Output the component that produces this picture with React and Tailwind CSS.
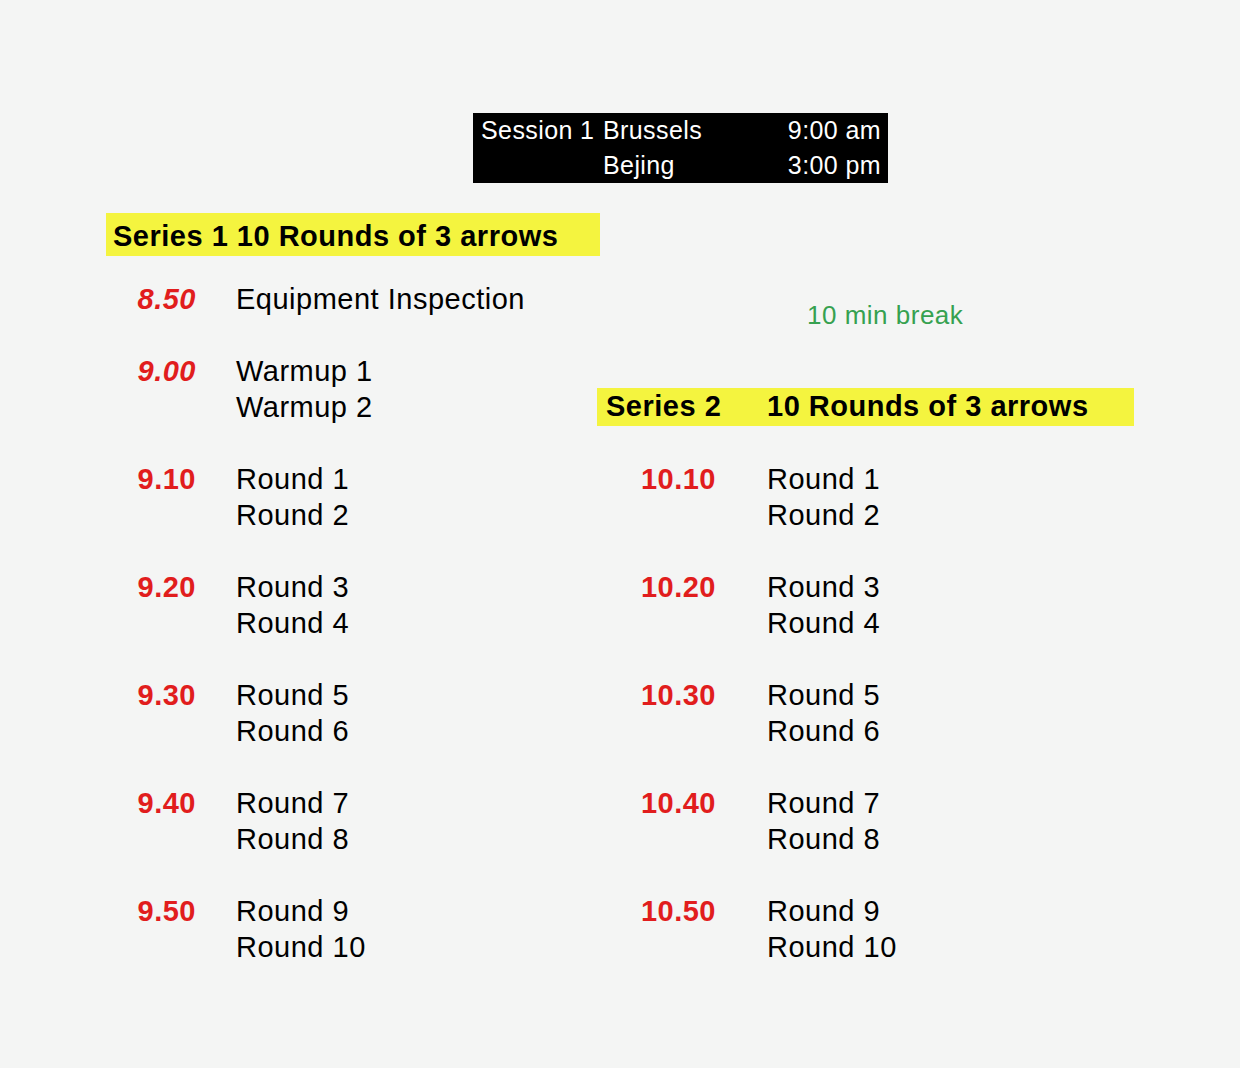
import React from 'react';

const left = [
  ['8.50', 'Equipment Inspection', true],
  null,
  ['9.00', 'Warmup 1', true],
  ['', 'Warmup 2'],
  null,
  ['9.10', 'Round 1'],
  ['', 'Round 2'],
  null,
  ['9.20', 'Round 3'],
  ['', 'Round 4'],
  null,
  ['9.30', 'Round 5'],
  ['', 'Round 6'],
  null,
  ['9.40', 'Round 7'],
  ['', 'Round 8'],
  null,
  ['9.50', 'Round 9'],
  ['', 'Round 10'],
];

const right = [
  ['10.10', 'Round 1'],
  ['', 'Round 2'],
  null,
  ['10.20', 'Round 3'],
  ['', 'Round 4'],
  null,
  ['10.30', 'Round 5'],
  ['', 'Round 6'],
  null,
  ['10.40', 'Round 7'],
  ['', 'Round 8'],
  null,
  ['10.50', 'Round 9'],
  ['', 'Round 10'],
];

// one 36px spreadsheet line: red time, then the label
const Line = ({ row, timeW, gap }) => {
  if (!row) return <div className="h-[36px]" />;
  const [time, label, italic] = row;
  return (
    <div className="flex h-[36px] items-center leading-[36px]">
      <div className={`${timeW} text-right font-bold text-[#e11d1d] ${italic ? 'italic' : ''}`}>{time}</div>
      <div className={gap}>{label}</div>
    </div>
  );
};

export default function App() {
  return (
    <div className="min-h-screen w-full bg-[#f4f5f4] pt-[113px] font-['Liberation_Sans',Arial,sans-serif] text-black">
      <div className="ml-[473px] grid h-[70px] w-[415px] grid-cols-[122px_1fr_auto] bg-black pl-[8px] pr-[7px] text-[25px] leading-[34px] tracking-[0.4px] text-white">
        <div>Session 1</div>
        <div>Brussels</div>
        <div className="text-right">9:00 am</div>
        <div />
        <div>Bejing</div>
        <div className="text-right">3:00 pm</div>
      </div>

      <div className="ml-[106px] mt-[30px] flex h-[43px] w-[494px] items-center bg-[#f4f43f] pl-[7px] pt-[4px] text-[29px] font-bold tracking-[0.5px]">
        Series 1 10 Rounds of 3 arrows
      </div>

      <div className="ml-[106px] mt-[25px] flex text-[29px] tracking-[0.5px]">
        <div className="flex w-[491px] flex-col">
          {left.map((row, i) => (
            <Line key={i} row={row} timeW="w-[90px]" gap="pl-[40px]" />
          ))}
        </div>

        <div className="flex w-[537px] flex-col">
          <div className="h-[72px] pl-[210px] pt-[16px] text-[26px] leading-[36px] tracking-[0.5px] text-[#36a150]">10 min break</div>
          <div className="h-[36px]" />
          <div className="flex h-[36px] items-center">
            <div className="flex h-[38px] w-full items-center bg-[#f4f43f] font-bold">
              <div className="w-[170px] pl-[9px]">Series 2</div>
              <div>10 Rounds of 3 arrows</div>
            </div>
          </div>
          <div className="h-[36px]" />
          {right.map((row, i) => (
            <Line key={i} row={row} timeW="w-[119px]" gap="pl-[51px]" />
          ))}
        </div>
      </div>
    </div>
  );
}
